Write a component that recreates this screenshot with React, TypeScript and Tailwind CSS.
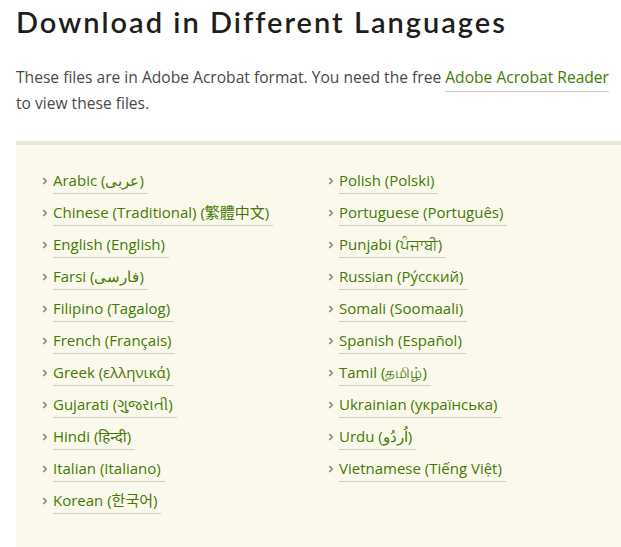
import { ChevronRight } from "lucide-react";

const left = [
  "Arabic (عربى)",
  "Chinese (Traditional) (繁體中文)",
  "English (English)",
  "Farsi (فارسی)",
  "Filipino (Tagalog)",
  "French (Français)",
  "Greek (ελληνικά)",
  "Gujarati (ગુજરાતી)",
  "Hindi (हिन्दी)",
  "Italian (Italiano)",
  "Korean (한국어)",
];

const right = [
  "Polish (Polski)",
  "Portuguese (Português)",
  "Punjabi (ਪੰਜਾਬੀ)",
  "Russian (Ру́сский)",
  "Somali (Soomaali)",
  "Spanish (Español)",
  "Tamil (தமிழ்)",
  "Ukrainian (українська)",
  "Urdu (اُردُو)",
  "Vietnamese (Tiếng Việt)",
];

function LangList({ items }: { items: string[] }) {
  return (
    <ul className="flex flex-col">
      {items.map((name) => (
        <li key={name} className="flex items-center h-8 gap-[3px]">
          <ChevronRight className="w-[10px] h-[10px] text-[#85857c] shrink-0" strokeWidth={4} />
          <a
            href="#"
            className="text-[#437a05] text-[15px] leading-5 border-b border-[#d0cfc4] pb-[3px] pr-[4px] mt-[2px]"
          >
            {name}
          </a>
        </li>
      ))}
    </ul>
  );
}

export default function App() {
  return (
    <div
      className="pl-4 pt-1 bg-white min-h-[547px] overflow-hidden"
      style={{ fontFamily: '"Open Sans", "Noto Sans", "Noto Sans CJK TC", "Noto Sans CJK KR", sans-serif' }}
    >
      <h1
        className="text-[29px] leading-9 font-semibold text-[#1e1e1a] tracking-[2px]"
        style={{ fontFamily: 'Lato, "Noto Sans", sans-serif' }}
      >
        Download in Different Languages
      </h1>

      <p className="mt-6 text-[15.6px] leading-[26px] text-[#4a4a44] pr-2">
        These files are in Adobe Acrobat format. You need the free{" "}
        <a href="#" className="text-[#437a05] border-b border-[#d0cfc4] pb-[3px]">
          Adobe Acrobat Reader
        </a>{" "}
        to view these files.
      </p>

      <div className="mt-[25px] border-t-4 border-[#e9e6d6] bg-[#fbf9ec] pt-[20px] pl-6 pb-10 grid grid-cols-[286px_1fr]">
        <LangList items={left} />
        <LangList items={right} />
      </div>
    </div>
  );
}
